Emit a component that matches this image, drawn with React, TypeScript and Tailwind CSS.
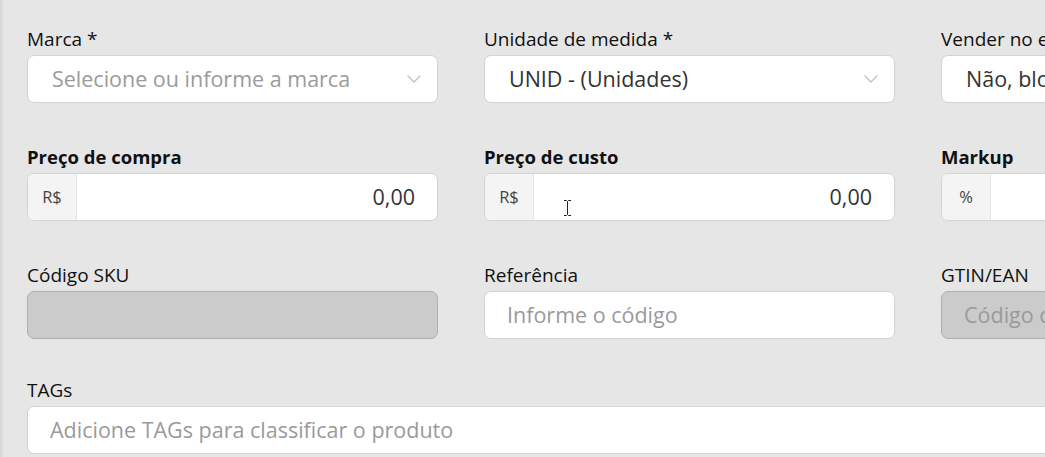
const font = { fontFamily: "'Open Sans', 'Noto Sans', sans-serif" };

function Label({ text, bold }: { text: string; bold?: boolean }) {
  return (
    <div
      className={`h-[27px] leading-[22px] text-[#111] whitespace-nowrap ${
        bold ? "font-bold text-[18.5px]" : "text-[19px]"
      }`}
    >
      {text}
    </div>
  );
}

function Chevron() {
  return (
    <svg width="14" height="8" viewBox="0 0 14 8" className="shrink-0">
      <path d="M1 1l6 6 6-6" stroke="#c2c2c2" strokeWidth="1.4" fill="none" strokeLinecap="round" strokeLinejoin="round" />
    </svg>
  );
}

function Select({ value, placeholder }: { value?: string; placeholder?: string }) {
  return (
    <div className="h-[48px] bg-white border border-[#d3d3d3] rounded-[7px] flex items-center pl-[24px] pr-[16px]">
      <span className={`flex-1 text-[21.5px] whitespace-nowrap ${value ? "text-[#333]" : "text-[#9a9a9a]"}`}>
        {value ?? placeholder}
      </span>
      <Chevron />
    </div>
  );
}

function Money({ prefix, value }: { prefix: string; value?: string }) {
  return (
    <div className="h-[48px] bg-white border border-[#d3d3d3] rounded-[7px] flex overflow-hidden">
      <div className="w-[49px] bg-[#f4f4f4] border-r border-[#e4e4e4] flex items-center justify-center text-[16.5px] text-[#444]">
        {prefix}
      </div>
      <div className="flex-1 flex items-center justify-end pr-[22px] text-[21.5px] text-[#333]">{value}</div>
    </div>
  );
}

function TextInput({ placeholder, disabled }: { placeholder?: string; disabled?: boolean }) {
  return (
    <div
      className={`h-[48px] rounded-[7px] border flex items-center pl-[22px] text-[21.5px] text-[#9a9a9a] whitespace-nowrap ${
        disabled ? "bg-[#cbcbcb] border-[#b0b0b0]" : "bg-white border-[#d3d3d3]"
      }`}
    >
      {placeholder}
    </div>
  );
}

export default function App() {
  return (
    <div className="relative w-[1045px] h-[457px] overflow-hidden bg-[#e6e6e6]" style={font}>
      <div className="absolute left-0 top-0 bottom-0 w-[4px] bg-gradient-to-r from-[#d6d6d6] to-[#e6e6e6]"></div>
      <div className="pl-[27px] pt-[28px]">
        <div className="grid grid-cols-[411px_411px_411px] gap-x-[46px] gap-y-[43px]">
          <div>
            <Label text="Marca *" />
            <Select placeholder="Selecione ou informe a marca" />
          </div>
          <div>
            <Label text="Unidade de medida *" />
            <Select value="UNID - (Unidades)" />
          </div>
          <div>
            <Label text="Vender no e-commerce" />
            <Select value="Não, bloquear venda" />
          </div>

          <div>
            <Label text="Preço de compra" bold />
            <Money prefix="R$" value="0,00" />
          </div>
          <div className="relative">
            <Label text="Preço de custo" bold />
            <Money prefix="R$" value="0,00" />
            {/* mouse cursor */}
            <svg className="absolute left-[79px] top-[54px]" width="9" height="16" viewBox="0 0 9 16">
              <path d="M1 0.5h2.5L4.5 1.5L5.5 0.5H8M4.5 1.5V14.5M1 15.5h2.5L4.5 14.5L5.5 15.5H8" stroke="#222" strokeWidth="1" fill="none" />
            </svg>
          </div>
          <div>
            <Label text="Markup" bold />
            <Money prefix="%" />
          </div>

          <div>
            <Label text="Código SKU" />
            <TextInput disabled />
          </div>
          <div>
            <Label text="Referência" />
            <TextInput placeholder="Informe o código" />
          </div>
          <div>
            <Label text="GTIN/EAN" />
            <TextInput placeholder="Código de barras" disabled />
          </div>
        </div>

        <div className="mt-[40px] w-[1100px]">
          <Label text="TAGs" />
          <TextInput placeholder="Adicione TAGs para classificar o produto" />
        </div>
      </div>
    </div>
  );
}
